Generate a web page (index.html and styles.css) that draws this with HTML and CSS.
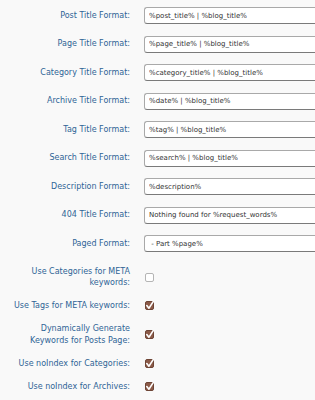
FILE: index.html
```html
<!DOCTYPE html>
<html lang="en">
<head>
    <meta charset="UTF-8">
    <meta name="viewport" content="width=device-width, initial-scale=1.0">
    <title>SEO Options</title>
    <link rel="stylesheet" href="styles.css">
</head>
<body>
    <div class="options">
        <div class="row">
            <label class="row-label">Post Title Format:</label>
            <input class="text-field" type="text" value="%post_title% | %blog_title%">
        </div>
        <div class="row">
            <label class="row-label">Page Title Format:</label>
            <input class="text-field" type="text" value="%page_title% | %blog_title%">
        </div>
        <div class="row">
            <label class="row-label">Category Title Format:</label>
            <input class="text-field" type="text" value="%category_title% | %blog_title%">
        </div>
        <div class="row">
            <label class="row-label">Archive Title Format:</label>
            <input class="text-field" type="text" value="%date% | %blog_title%">
        </div>
        <div class="row">
            <label class="row-label">Tag Title Format:</label>
            <input class="text-field" type="text" value="%tag% | %blog_title%">
        </div>
        <div class="row">
            <label class="row-label">Search Title Format:</label>
            <input class="text-field" type="text" value="%search% | %blog_title%">
        </div>
        <div class="row">
            <label class="row-label">Description Format:</label>
            <input class="text-field" type="text" value="%description%">
        </div>
        <div class="row">
            <label class="row-label">404 Title Format:</label>
            <input class="text-field" type="text" value="Nothing found for %request_words%">
        </div>
        <div class="row">
            <label class="row-label">Paged Format:</label>
            <input class="text-field" type="text" value=" - Part %page%">
        </div>

        <div class="checks">
            <div class="row">
                <label class="row-label">Use Categories for META keywords:</label>
                <span class="box"></span>
            </div>
            <div class="row">
                <label class="row-label">Use Tags for META keywords:</label>
                <span class="box checked"><svg viewBox="0 0 9 9"><path d="M1.8 4.6 L3.9 7.2 L8.2 0.6"/></svg></span>
            </div>
            <div class="row">
                <label class="row-label">Dynamically Generate Keywords for Posts Page:</label>
                <span class="box checked"><svg viewBox="0 0 9 9"><path d="M1.8 4.6 L3.9 7.2 L8.2 0.6"/></svg></span>
            </div>
            <div class="row">
                <label class="row-label">Use noIndex for Categories:</label>
                <span class="box checked"><svg viewBox="0 0 9 9"><path d="M1.8 4.6 L3.9 7.2 L8.2 0.6"/></svg></span>
            </div>
            <div class="row">
                <label class="row-label">Use noIndex for Archives:</label>
                <span class="box checked"><svg viewBox="0 0 9 9"><path d="M1.8 4.6 L3.9 7.2 L8.2 0.6"/></svg></span>
            </div>
        </div>
    </div>
</body>
</html>
```

FILE: styles.css
```css
body {
    margin: 0;
    padding: 1px 0 0 0;
    background-color: #f9f9f9;
    font-family: "DejaVu Sans", Verdana, sans-serif;
}

.options {
    width: 315px;
}

.row {
    display: flex;
    align-items: center;
    padding: 6px 0 5.5px 0;
}

.row-label {
    width: 122px;
    padding-left: 8px;
    margin-right: 14px;
    flex-shrink: 0;
    text-align: right;
    font-size: 8px;
    line-height: 11.5px;
    color: #2f6496;
}

.text-field {
    box-sizing: border-box;
    width: 171px;
    height: 17px;
    margin: 0;
    padding: 0 4px;
    border: 1px solid #a9a9a9;
    border-right: none;
    border-bottom-color: #7a7a7a;
    border-radius: 3px 0 0 3px;
    background-color: #fff;
    font-family: "DejaVu Sans", Verdana, sans-serif;
    font-size: 7px;
    color: #333;
    white-space: pre;
}

.checks {
    margin-top: 2px;
}

.box {
    box-sizing: border-box;
    display: block;
    width: 9px;
    height: 9px;
    margin-left: 1px;
    border: 1px solid #b5b5b5;
    border-radius: 2px;
    background-color: #fff;
}

.box.checked {
    border-color: #6e4536;
    background-color: #8b5a48;
}

.box svg {
    display: block;
    width: 9px;
    height: 9px;
    margin: -1px 0 0 -1px;
    overflow: visible;
}

.box path {
    fill: none;
    stroke: #fff;
    stroke-width: 1.6;
    stroke-linecap: round;
    stroke-linejoin: round;
}
```
